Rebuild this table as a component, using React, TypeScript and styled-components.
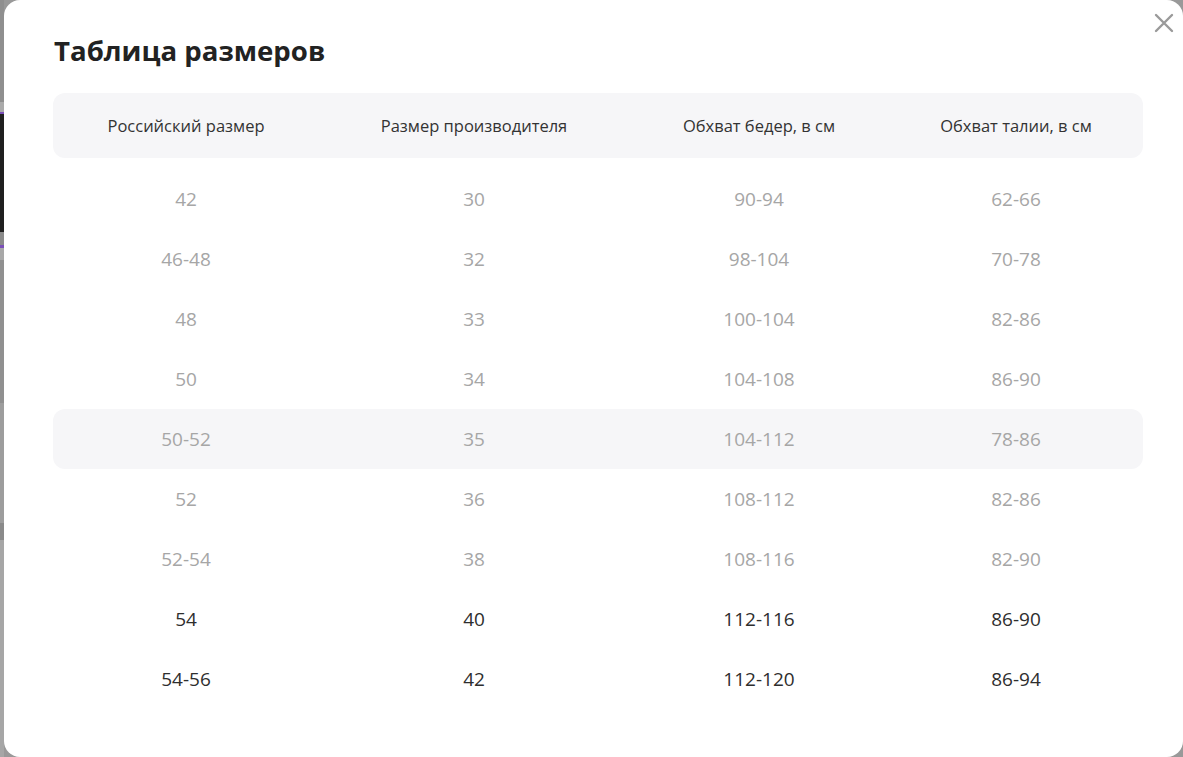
import React from "react";
import styled, { createGlobalStyle } from "styled-components";

const Global = createGlobalStyle`
  html, body { margin: 0; padding: 0; background: #999; }
  body { font-family: "Open Sans", "Noto Sans", Arial, sans-serif; }
  #root { width: 1183px; height: 757px; overflow: hidden; }
`;

const Screen = styled.div`
  display: flex;
  width: 1183px;
  height: 757px;
  background: #999;
`;

const Backdrop = styled.div`
  width: 4px;
  flex: none;
  display: flex;
  flex-direction: column;
`;

const Band = styled.div<{ $h: number; $c: string }>`
  height: ${(p) => p.$h}px;
  background: ${(p) => p.$c};
  flex: none;
`;

const Modal = styled.div`
  position: relative;
  flex: 1;
  background: #fff;
  border-radius: 16px;
  padding: 30px 40px 0 49px;
  box-sizing: border-box;
`;

const Title = styled.h2`
  margin: 0 0 0 1px;
  font-size: 27.6px;
  line-height: 40px;
  font-weight: 700;
  color: #222;
  letter-spacing: 0;
`;

const Close = styled.button`
  position: absolute;
  top: 12px;
  right: 8px;
  width: 22px;
  height: 22px;
  padding: 0;
  border: 0;
  background: none;
  display: flex;
  align-items: center;
  justify-content: center;
  cursor: pointer;
`;

const Table = styled.div`
  margin-top: 23px;
  display: flex;
  flex-direction: column;
`;

const HeadRow = styled.div`
  display: grid;
  grid-template-columns: 266px 310px 260px 254px;
  height: 65px;
  align-items: center;
  background: #f6f6f8;
  border-radius: 12px;
  margin-bottom: 11px;
`;

const HeadCell = styled.div`
  text-align: center;
  font-size: 16.5px;
  color: #333;
  line-height: 20px;
`;

const Row = styled.div<{ $hl?: boolean }>`
  display: grid;
  grid-template-columns: 266px 310px 260px 254px;
  height: 60px;
  align-items: center;
  border-radius: 12px;
  background: ${(p) => (p.$hl ? "#f6f6f8" : "transparent")};
`;

const Cell = styled.div<{ $dark?: boolean }>`
  text-align: center;
  font-size: 19px;
  line-height: 24px;
  color: ${(p) => (p.$dark ? "#2e2e2e" : "#a6a6a6")};
`;

const headers = [
  "Российский размер",
  "Размер производителя",
  "Обхват бедер, в см",
  "Обхват талии, в см",
];

const rows: { v: string[]; hl?: boolean; dark?: boolean }[] = [
  { v: ["42", "30", "90-94", "62-66"] },
  { v: ["46-48", "32", "98-104", "70-78"] },
  { v: ["48", "33", "100-104", "82-86"] },
  { v: ["50", "34", "104-108", "86-90"] },
  { v: ["50-52", "35", "104-112", "78-86"], hl: true },
  { v: ["52", "36", "108-112", "82-86"] },
  { v: ["52-54", "38", "108-116", "82-90"] },
  { v: ["54", "40", "112-116", "86-90"], dark: true },
  { v: ["54-56", "42", "112-120", "86-94"], dark: true },
];

const bands: [number, string][] = [
  [102, "#8f8f8f"],
  [10, "#aaaaaa"],
  [2, "#7b4fb8"],
  [118, "#1f1f1f"],
  [13, "#8a8a8a"],
  [3, "#7b4fb8"],
  [12, "#a8a8a8"],
  [143, "#909090"],
  [120, "#9d9d9d"],
  [17, "#8a8a8a"],
  [217, "#a6a6a6"],
];

export default function App() {
  return (
    <>
      <Global />
      <Screen>
        <Backdrop>
          {bands.map(([h, c], i) => (
            <Band key={i} $h={h} $c={c} />
          ))}
        </Backdrop>
        <Modal>
          <Close aria-label="Закрыть">
            <svg width="20" height="20" viewBox="0 0 20 20">
              <path
                d="M2 2 L18 18 M18 2 L2 18"
                stroke="#9a9a9a"
                strokeWidth="2.4"
                strokeLinecap="round"
              />
            </svg>
          </Close>
          <Title>Таблица размеров</Title>
          <Table>
            <HeadRow>
              {headers.map((h) => (
                <HeadCell key={h}>{h}</HeadCell>
              ))}
            </HeadRow>
            {rows.map((r, i) => (
              <Row key={i} $hl={r.hl}>
                {r.v.map((c, j) => (
                  <Cell key={j} $dark={r.dark}>
                    {c}
                  </Cell>
                ))}
              </Row>
            ))}
          </Table>
        </Modal>
      </Screen>
    </>
  );
}
